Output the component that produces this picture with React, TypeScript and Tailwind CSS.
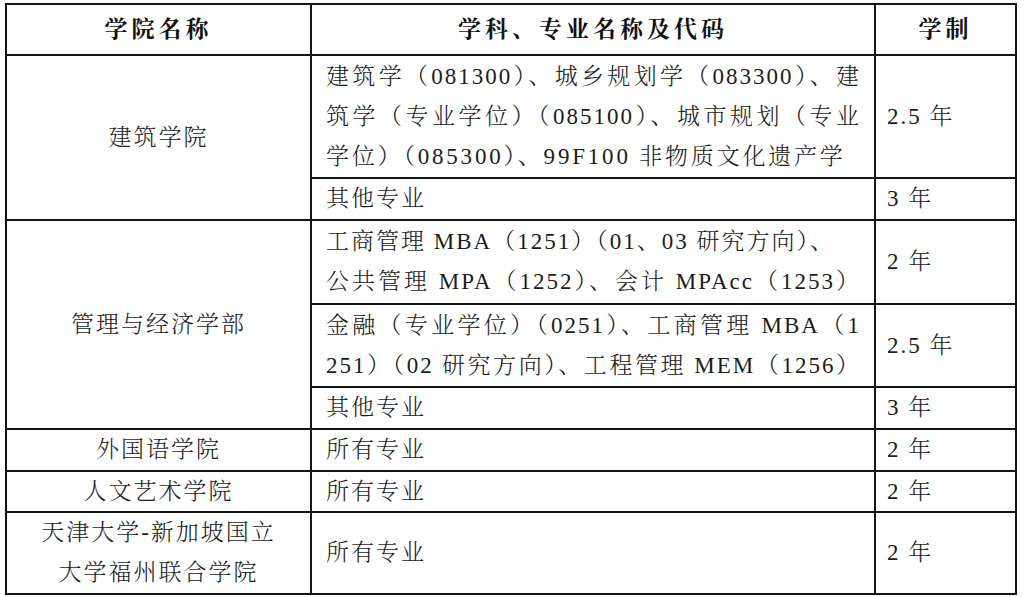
const font = {
  fontFamily: '"Liberation Serif", "Noto Serif CJK SC", "Noto Sans CJK SC", serif',
};

type Line = { text: string; justify?: boolean; wide?: boolean };

function Lines({ lines }: { lines: Line[] }) {
  return (
    <div className="flex flex-col">
      {lines.map((l, i) => (
        <div
          key={i}
          className={
            'whitespace-nowrap leading-[40px] ' +
            (l.justify ? '[text-align-last:justify] text-justify ' : '') +
            (l.wide ? 'tracking-[2.8px]' : '')
          }
        >
          {l.text}
        </div>
      ))}
    </div>
  );
}

const cell = 'border-2 border-[#141414] align-middle p-0 leading-[30px]';
const nameCell = cell + ' text-center';
const majorCell = cell + ' pl-[14px] pr-[13px]';
const yearCell = cell + ' pl-[11px]';
const headCell = cell + ' h-[51px] text-center font-bold text-[#111] tracking-[4px]';

export default function App() {
  return (
    <div className="w-[1024px] h-[597px] bg-white overflow-hidden pt-[3px] pl-[5px]">
      <table
        className="border-collapse table-fixed w-[1010px] text-[23px] tracking-[2px] text-[#1c1c1c] [font-weight:350]"
        style={font}
      >
        <colgroup>
          <col className="w-[305px]" />
          <col className="w-[564px]" />
          <col className="w-[141px]" />
        </colgroup>
        <tbody>
          <tr>
            <td className={headCell}>学院名称</td>
            <td className={headCell}>学科、专业名称及代码</td>
            <td className={headCell}>学制</td>
          </tr>
          <tr>
            <td rowSpan={2} className={nameCell}>
              建筑学院
            </td>
            <td className={majorCell + ' h-[123px]'}>
              <Lines
                lines={[
                  { text: '建筑学（081300）、城乡规划学（083300）、建', justify: true },
                  { text: '筑学（专业学位）（085100）、城市规划（专业', justify: true },
                  { text: '学位）（085300）、99F100 非物质文化遗产学', wide: true },
                ]}
              />
            </td>
            <td className={yearCell + ' h-[123px]'}>2.5 年</td>
          </tr>
          <tr>
            <td className={majorCell + ' h-[42px]'}>其他专业</td>
            <td className={yearCell + ' h-[42px]'}>3 年</td>
          </tr>
          <tr>
            <td rowSpan={3} className={nameCell}>
              管理与经济学部
            </td>
            <td className={majorCell + ' h-[84px]'}>
              <Lines
                lines={[
                  { text: '工商管理 MBA（1251）（01、03 研究方向）、' },
                  { text: '公共管理 MPA（1252）、会计 MPAcc（1253）', justify: true },
                ]}
              />
            </td>
            <td className={yearCell + ' h-[84px]'}>2 年</td>
          </tr>
          <tr>
            <td className={majorCell + ' h-[83px]'}>
              <Lines
                lines={[
                  { text: '金融（专业学位）（0251）、工商管理 MBA（1', justify: true },
                  { text: '251）（02 研究方向）、工程管理 MEM（1256）', justify: true },
                ]}
              />
            </td>
            <td className={yearCell + ' h-[83px]'}>2.5 年</td>
          </tr>
          <tr>
            <td className={majorCell + ' h-[42px]'}>其他专业</td>
            <td className={yearCell + ' h-[42px]'}>3 年</td>
          </tr>
          <tr>
            <td className={nameCell + ' h-[42px]'}>外国语学院</td>
            <td className={majorCell + ' h-[42px]'}>所有专业</td>
            <td className={yearCell + ' h-[42px]'}>2 年</td>
          </tr>
          <tr>
            <td className={nameCell + ' h-[41px]'}>人文艺术学院</td>
            <td className={majorCell + ' h-[41px]'}>所有专业</td>
            <td className={yearCell + ' h-[41px]'}>2 年</td>
          </tr>
          <tr>
            <td className={nameCell + ' h-[82px] leading-[40px]'}>
              天津大学-新加坡国立
              <br />
              大学福州联合学院
            </td>
            <td className={majorCell + ' h-[82px]'}>所有专业</td>
            <td className={yearCell + ' h-[82px]'}>2 年</td>
          </tr>
        </tbody>
      </table>
    </div>
  );
}
